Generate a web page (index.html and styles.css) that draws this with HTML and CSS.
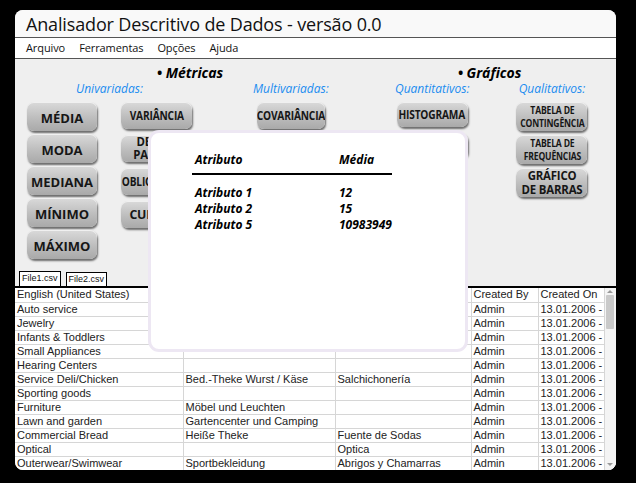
FILE: index.html
```html
<!DOCTYPE html>
<html>
<head>
<meta charset="utf-8">
<link rel="stylesheet" href="styles.css">
</head>
<body>
<div class="window">
  <div class="titlebar">Analisador Descritivo de Dados - versão 0.0</div>
  <div class="menubar">
    <span class="menu">Arquivo</span>
    <span class="menu">Ferramentas</span>
    <span class="menu">Opções</span>
    <span class="menu">Ajuda</span>
  </div>
  <div class="panel">
    <div class="group metricas">
      <div class="heading">• Métricas</div>
      <div class="subgroups">
        <div class="sub univ">
          <div class="label">Univariadas:</div>
          <div class="cols">
            <div class="col col-a">
              <div class="btn big">MÉDIA</div>
              <div class="btn big">MODA</div>
              <div class="btn big">MEDIANA</div>
              <div class="btn big">MÍNIMO</div>
              <div class="btn big">MÁXIMO</div>
            </div>
            <div class="col col-b">
              <div class="btn cond"><span class="sq">VARIÂNCIA</span></div>
              <div class="btn cond"><span class="sq two">DESVIO<br>PADRÃO</span></div>
              <div class="btn cond"><span class="sq">OBLIQUIDADE</span></div>
              <div class="btn cond"><span class="sq big2">CURTOSE</span></div>
            </div>
          </div>
        </div>
        <div class="sub multi">
          <div class="label">Multivariadas:</div>
          <div class="cols">
            <div class="col col-c">
              <div class="btn cond"><span class="sq">COVARIÂNCIA</span></div>
              <div class="btn cond"><span class="sq">CORRELAÇÃO</span></div>
            </div>
          </div>
        </div>
      </div>
    </div>
    <div class="group graficos">
      <div class="heading">• Gráficos</div>
      <div class="subgroups">
        <div class="sub quant">
          <div class="label">Quantitativos:</div>
          <div class="cols">
            <div class="col col-d">
              <div class="btn cond short"><span class="sq">HISTOGRAMA</span></div>
              <div class="btn cond short"><span class="sq">BOXPLOT</span></div>
            </div>
          </div>
        </div>
        <div class="sub qual">
          <div class="label">Qualitativos:</div>
          <div class="cols">
            <div class="col col-e">
              <div class="btn cond tall"><span class="sq small">TABELA DE<br>CONTINGÊNCIA</span></div>
              <div class="btn cond tall"><span class="sq small">TABELA DE<br>FREQUÊNCIAS</span></div>
              <div class="btn cond tall"><span class="sq mid">GRÁFICO<br>DE BARRAS</span></div>
            </div>
          </div>
        </div>
      </div>
    </div>
  </div>
  <div class="tabs">
    <div class="tab active">File1.csv</div>
    <div class="tab">File2.csv</div>
  </div>
  <div class="tablewrap">
    <table class="grid">
      <colgroup>
        <col class="c1"><col class="c2"><col class="c3"><col class="c4"><col class="c5">
      </colgroup>
      <tr><td>English (United States)</td><td></td><td></td><td>Created By</td><td>Created On</td></tr>
      <tr><td>Auto service</td><td></td><td></td><td>Admin</td><td>13.01.2006 -</td></tr>
      <tr><td>Jewelry</td><td></td><td></td><td>Admin</td><td>13.01.2006 -</td></tr>
      <tr><td>Infants &amp; Toddlers</td><td></td><td></td><td>Admin</td><td>13.01.2006 -</td></tr>
      <tr><td>Small Appliances</td><td></td><td></td><td>Admin</td><td>13.01.2006 -</td></tr>
      <tr><td>Hearing Centers</td><td></td><td></td><td>Admin</td><td>13.01.2006 -</td></tr>
      <tr><td>Service Deli/Chicken</td><td>Bed.-Theke Wurst / Käse</td><td>Salchichonería</td><td>Admin</td><td>13.01.2006 -</td></tr>
      <tr><td>Sporting goods</td><td></td><td></td><td>Admin</td><td>13.01.2006 -</td></tr>
      <tr><td>Furniture</td><td>Möbel und Leuchten</td><td></td><td>Admin</td><td>13.01.2006 -</td></tr>
      <tr><td>Lawn and garden</td><td>Gartencenter und Camping</td><td></td><td>Admin</td><td>13.01.2006 -</td></tr>
      <tr><td>Commercial Bread</td><td>Heiße Theke</td><td>Fuente de Sodas</td><td>Admin</td><td>13.01.2006 -</td></tr>
      <tr><td>Optical</td><td></td><td>Optica</td><td>Admin</td><td>13.01.2006 -</td></tr>
      <tr><td>Outerwear/Swimwear</td><td>Sportbekleidung</td><td>Abrigos y Chamarras</td><td>Admin</td><td>13.01.2006 -</td></tr>
    </table>
    <div class="scrollbar">
      <div class="arrow up"></div>
      <div class="thumb"></div>
      <div class="arrow down"></div>
    </div>
  </div>
  <div class="modal">
    <table class="result">
      <tr class="head"><th>Atributo</th><th>Média</th></tr>
      <tr class="first"><td>Atributo 1</td><td>12</td></tr>
      <tr><td>Atributo 2</td><td>15</td></tr>
      <tr><td>Atributo 5</td><td>10983949</td></tr>
    </table>
  </div>
</div>
</body>
</html>
```

FILE: styles.css
```css
* { box-sizing: border-box; }
html, body { margin: 0; padding: 0; }
body {
  background: #000;
  width: 636px;
  height: 483px;
  overflow: hidden;
  font-family: "Open Sans", "DejaVu Sans", sans-serif;
}
.window {
  position: relative;
  margin: 10px 0 0 15px;
  width: 601px;
  height: 460px;
  border-radius: 8px;
  background: #efefef;
  overflow: hidden;
}
.titlebar {
  height: 28px;
  background: #f9f9f9;
  border-bottom: 1px solid #555;
  padding-left: 11px;
  font-size: 18px;
  letter-spacing: -0.15px;
  line-height: 28px;
  color: #111;
  white-space: nowrap;
}
.menubar {
  height: 21px;
  background: #fff;
  border-bottom: 1px solid #555;
  display: flex;
  padding-left: 11px;
  gap: 14px;
  font-size: 11px;
  letter-spacing: -0.1px;
  line-height: 19px;
  color: #111;
}
.panel {
  height: 212px;
  display: flex;
  padding: 5px 0 0 12px;
}
.group { display: flex; flex-direction: column; }
.metricas { width: 294px; }
.metricas .heading { padding-left: 32px; }
.graficos { margin-left: 74px; width: 189px; }
.heading {
  height: 18px;
  text-align: center;
  font-weight: 700;
  font-style: italic;
  font-size: 14px;
  line-height: 18px;
  color: #000;
  white-space: nowrap;
}
.subgroups { display: flex; }
.sub { display: flex; flex-direction: column; align-items: center; }
.multi { margin-left: 61px; }
.qual { margin-left: 47px; }
.label {
  height: 14px;
  font-style: italic;
  font-size: 12px;
  line-height: 14px;
  color: #1a8cf0;
  white-space: nowrap;
  margin-bottom: 6px;
}
.cols { display: flex; gap: 24px; }
.col { display: flex; flex-direction: column; }
.col-a { width: 70px; gap: 3px; }
.col-b { width: 71px; gap: 6px; }
.col-c { width: 68px; gap: 6px; }
.col-d { width: 71px; gap: 6px; }
.col-e { width: 71px; gap: 4px; }
.btn {
  height: 27px;
  border-radius: 7px;
  background: linear-gradient(#dadada, #bdbdbd 55%, #a9a9a9);
  box-shadow: 1px 2px 2px rgba(0,0,0,0.55), inset 0 1px 0 rgba(255,255,255,0.6);
  display: flex;
  align-items: center;
  justify-content: center;
  text-align: center;
  color: #161616;
  font-weight: 700;
  white-space: nowrap;
  overflow: hidden;
}
.btn.big {
  height: 29px;
  font-size: 13px;
  font-family: "Open Sans", "DejaVu Sans", sans-serif;
  padding-top: 3px;
}
.btn.cond {
  font-family: "Open Sans", "DejaVu Sans", sans-serif;
  font-size: 13px;
  line-height: 14px;
  padding-bottom: 2px;
}
.sq {
  display: inline-block;
  transform: scaleX(0.78);
  letter-spacing: -0.2px;
}
.sq.two { font-size: 12px; line-height: 13px; transform: scaleX(0.95); }
.sq.big2 { transform: scaleX(0.95); }
.sq.small { font-size: 10px; line-height: 13px; transform: scaleX(0.86); }
.sq.mid { font-size: 12px; line-height: 14px; transform: scaleX(0.95); }
.btn.short { height: 25px; }
.btn.tall { height: 29px; padding-bottom: 0; }
.tabs {
  height: 15px;
  display: flex;
  gap: 5px;
  padding-left: 4px;
  align-items: flex-end;
}
.tab {
  height: 14px;
  padding: 0 2px;
  background: #fff;
  border: 1px solid #000;
  border-bottom: none;
  font-family: "Liberation Sans", Arial, sans-serif;
  font-size: 9px;
  line-height: 13px;
  color: #111;
}
.tab.active { height: 15px; }
.tablewrap {
  display: flex;
  border-top: 2px solid #000;
  background: #fff;
  height: 184px;
}
.grid {
  border-collapse: collapse;
  table-layout: fixed;
  width: 589px;
  font-family: "Liberation Sans", Arial, sans-serif;
  font-size: 11px;
  color: #222;
}
.grid col.c1 { width: 168px; }
.grid col.c2 { width: 152px; }
.grid col.c3 { width: 136px; }
.grid col.c4 { width: 67px; }
.grid col.c5 { width: 66px; }
.grid td {
  height: 14px;
  padding: 0 2px;
  line-height: 13px;
  border: 1px solid #d6d6d6;
  border-top: none;
  white-space: nowrap;
  overflow: hidden;
}
.grid td:first-child { border-left: none; }
.scrollbar {
  width: 12px;
  background: #f4f4f4;
  display: flex;
  flex-direction: column;
  align-items: center;
}
.arrow.up {
  margin-top: 2px;
  border-left: 3px solid transparent;
  border-right: 3px solid transparent;
  border-bottom: 3px solid #999;
  width: 0; height: 0;
}
.thumb {
  margin-top: 2px;
  width: 8px;
  height: 34px;
  background: #c9c9c9;
  border-radius: 1px;
}
.arrow.down {
  margin-top: auto;
  margin-bottom: 4px;
  border-left: 3px solid transparent;
  border-right: 3px solid transparent;
  border-top: 3px solid #999;
  width: 0; height: 0;
}
.modal {
  position: absolute;
  left: 133px;
  top: 120px;
  width: 320px;
  height: 222px;
  background: #fff;
  border: 3px solid #ede7f3;
  border-radius: 11px;
  padding: 19px 0 0 41px;
}
.result {
  border-collapse: collapse;
  font-family: "Open Sans", "DejaVu Sans", sans-serif;
  font-weight: 700;
  font-style: italic;
  font-size: 12px;
  color: #000;
}
.result th, .result td {
  padding: 0 0 0 3px;
  text-align: left;
  line-height: 16px;
  font-weight: 700;
}
.result th:first-child, .result td:first-child { width: 144px; }
.result th:last-child, .result td:last-child { width: 45px; }
.result tr.head th {
  height: 22px;
  vertical-align: top;
  border-bottom: 2px solid #000;
}
.result tr.first td { padding-top: 10px; }
```
